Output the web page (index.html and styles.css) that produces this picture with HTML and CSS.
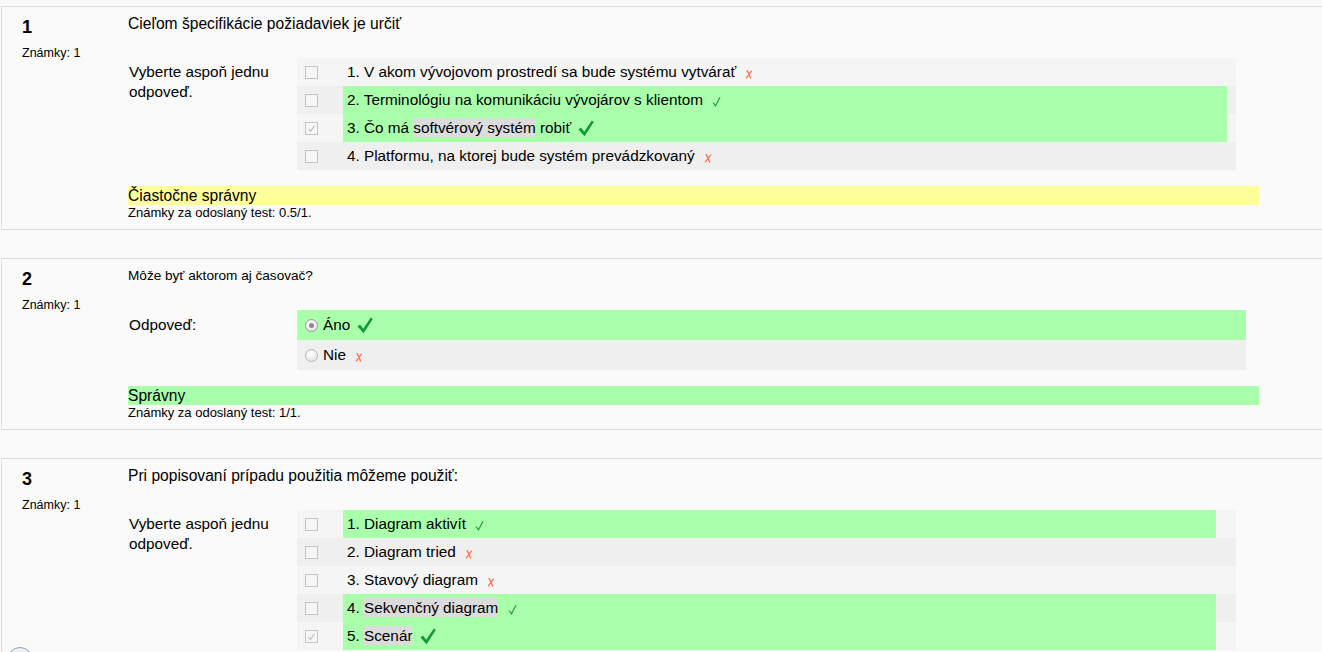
FILE: index.html
```html
<!DOCTYPE html>
<html lang="sk">
<head>
<meta charset="utf-8">
<title>Test</title>
<link rel="stylesheet" href="styles.css">
</head>
<body>
<div class="page">

  <div class="que">
    <div class="info">
      <h3 class="no">1</h3>
      <div class="grade">Známky: 1</div>
    </div>
    <div class="content">
      <div class="qtext">Cieľom špecifikácie požiadaviek je určiť</div>
      <div class="ablock">
        <div class="prompt">Vyberte aspoň jednu odpoveď.</div>
        <div class="answer">
          <div class="row r0">
            <div class="chk"><span class="box"></span></div>
            <div class="lbl">1. V akom vývojovom prostredí sa bude systému vytvárať <svg class="ic x" viewBox="0 0 8 10"><path d="M2.2 1.5 L5.6 9 M6.4 2.2 L1.4 8.8"/></svg></div>
          </div>
          <div class="row r1">
            <div class="chk"><span class="box"></span></div>
            <div class="lbl ok w1">2. Terminológiu na komunikáciu vývojárov s klientom <svg class="ic tick" viewBox="0 0 9 11"><path d="M1 6.5 L3.5 9.8 L8 1.2"/></svg></div>
          </div>
          <div class="row r0">
            <div class="chk"><span class="box on"><svg viewBox="0 0 11 11"><path d="M2.5 6 L4.5 8.5 L8.5 2.5"/></svg></span></div>
            <div class="lbl ok w1">3. Čo má <span class="hl">softvérový systém</span> robiť <svg class="ic bigtick" viewBox="0 0 16 17"><path d="M0.5 9.5 L3 7.5 L6.2 11.8 L13.8 0.5 L15.8 2 L6.6 16.2 Z"/></svg></div>
          </div>
          <div class="row r1">
            <div class="chk"><span class="box"></span></div>
            <div class="lbl">4. Platformu, na ktorej bude systém prevádzkovaný <svg class="ic x" viewBox="0 0 8 10"><path d="M2.2 1.5 L5.6 9 M6.4 2.2 L1.4 8.8"/></svg></div>
          </div>
        </div>
      </div>
      <div class="feedback partial">Čiastočne správny</div>
      <div class="marks">Známky za odoslaný test: 0.5/1.</div>
    </div>
  </div>

  <div class="que">
    <div class="info">
      <h3 class="no">2</h3>
      <div class="grade">Známky: 1</div>
    </div>
    <div class="content">
      <div class="qtext small">Môže byť aktorom aj časovač?</div>
      <div class="ablock">
        <div class="prompt radio-prompt">Odpoveď:</div>
        <div class="answer radios">
          <div class="rrow ok">
            <span class="radio on"></span><span class="rtext">Áno <svg class="ic bigtick" viewBox="0 0 16 17"><path d="M0.5 9.5 L3 7.5 L6.2 11.8 L13.8 0.5 L15.8 2 L6.6 16.2 Z"/></svg></span>
          </div>
          <div class="rrow r1">
            <span class="radio"></span><span class="rtext">Nie <svg class="ic x" viewBox="0 0 8 10"><path d="M2.2 1.5 L5.6 9 M6.4 2.2 L1.4 8.8"/></svg></span>
          </div>
        </div>
      </div>
      <div class="feedback correct">Správny</div>
      <div class="marks">Známky za odoslaný test: 1/1.</div>
    </div>
  </div>

  <div class="que">
    <div class="info">
      <h3 class="no">3</h3>
      <div class="grade">Známky: 1</div>
    </div>
    <div class="content">
      <div class="qtext">Pri popisovaní prípadu použitia môžeme použiť:</div>
      <div class="ablock">
        <div class="prompt">Vyberte aspoň jednu odpoveď.</div>
        <div class="answer">
          <div class="row r0">
            <div class="chk"><span class="box"></span></div>
            <div class="lbl ok w3">1. Diagram aktivít <svg class="ic tick" viewBox="0 0 9 11"><path d="M1 6.5 L3.5 9.8 L8 1.2"/></svg></div>
          </div>
          <div class="row r1">
            <div class="chk"><span class="box"></span></div>
            <div class="lbl">2. Diagram tried <svg class="ic x" viewBox="0 0 8 10"><path d="M2.2 1.5 L5.6 9 M6.4 2.2 L1.4 8.8"/></svg></div>
          </div>
          <div class="row r0">
            <div class="chk"><span class="box"></span></div>
            <div class="lbl">3. Stavový diagram <svg class="ic x" viewBox="0 0 8 10"><path d="M2.2 1.5 L5.6 9 M6.4 2.2 L1.4 8.8"/></svg></div>
          </div>
          <div class="row r1">
            <div class="chk"><span class="box"></span></div>
            <div class="lbl ok w3">4. <span class="hl">Sekvenčný diagram</span> <svg class="ic tick" viewBox="0 0 9 11"><path d="M1 6.5 L3.5 9.8 L8 1.2"/></svg></div>
          </div>
          <div class="row r0">
            <div class="chk"><span class="box on"><svg viewBox="0 0 11 11"><path d="M2.5 6 L4.5 8.5 L8.5 2.5"/></svg></span></div>
            <div class="lbl ok w3">5. <span class="hl">Scenár</span> <svg class="ic bigtick" viewBox="0 0 16 17"><path d="M0.5 9.5 L3 7.5 L6.2 11.8 L13.8 0.5 L15.8 2 L6.6 16.2 Z"/></svg></div>
          </div>
        </div>
      </div>
    </div>
  </div>

  <div class="dock-btn"></div>
</div>
</body>
</html>
```

FILE: styles.css
```css
html, body {
  margin: 0;
  padding: 0;
  overflow: hidden;
  height: 100%;
}
body {
  background: #fafafa;
  font-family: "Liberation Sans", Arial, sans-serif;
  color: #000;
}
.page {
  position: relative;
  padding-top: 6px;
  padding-left: 1px;
  width: 1400px;
  height: 646px;
}
.que {
  display: flex;
  border: 1px solid #dddddd;
  background: #fafafa;
  margin-bottom: 28px;
}
.info {
  width: 106px;
  padding: 8px 0 0 20px;
  flex: none;
}
.no {
  margin: 0;
  font-size: 18px;
  line-height: 24px;
  font-weight: bold;
}
.grade {
  margin-top: 8px;
  font-size: 12.5px;
  line-height: 13px;
}
.content {
  flex: 1;
  padding: 8px 0 8px 0;
}
.qtext {
  font-size: 15.6px;
  line-height: 18px;
  height: 18px;
}
.qtext.small {
  font-size: 13.6px;
}
.ablock {
  display: flex;
  margin-top: 25px;
}
.prompt {
  width: 150px;
  padding: 4px 18px 0 1px;
  font-size: 15.3px;
  line-height: 20px;
}
.radio-prompt {
  padding-top: 5px;
}
.answer {
  width: 939px;
  font-size: 15.3px;
}
.row {
  display: flex;
  height: 28px;
}
.r0 { background: #f5f5f5; }
.r1 { background: #efefef; }
.chk {
  width: 38px;
  padding-left: 8px;
  display: flex;
  align-items: center;
  flex: none;
}
.box {
  box-sizing: border-box;
  width: 13px;
  height: 13px;
  border: 1px solid #c4c4c4;
  background: #f6f6f6;
  display: flex;
  align-items: center;
  justify-content: center;
}
.box svg {
  width: 11px;
  height: 11px;
  fill: none;
  stroke: #bdbdbd;
  stroke-width: 1.2;
}
.lbl {
  padding-left: 4px;
  line-height: 28px;
  white-space: nowrap;
}
.lbl.ok { background: #aaffaa; }
.w1 { width: 880px; }
.w3 { width: 869px; }
.hl { background: #dcdcdc; padding: 1px 0; }
.ic {
  margin-left: 3px;
}
.ic.x {
  width: 8px;
  height: 10px;
  fill: none;
  stroke: #ff7450;
  stroke-width: 1.4;
  stroke-linecap: round;
  vertical-align: -2px;
  margin-left: 5px;
}
.ic.tick {
  width: 9px;
  height: 11px;
  fill: none;
  stroke: #22a045;
  stroke-width: 1.2;
  vertical-align: -2px;
  margin-left: 5px;
}
.ic.bigtick {
  width: 16px;
  height: 17px;
  fill: #129a35;
  vertical-align: -4px;
}
.radios {
  width: 949px;
}
.rrow {
  height: 30px;
  display: flex;
  align-items: center;
  padding-left: 8px;
}
.rrow.ok { background: #aaffaa; }
.rtext {
  white-space: nowrap;
  line-height: 30px;
}
.radio {
  box-sizing: border-box;
  width: 13px;
  height: 13px;
  border-radius: 50%;
  border: 1px solid #b8b8b8;
  background: radial-gradient(circle at 40% 35%, #ffffff, #dedede);
  margin-right: 5px;
  display: flex;
  align-items: center;
  justify-content: center;
  flex: none;
}
.radio.on::after {
  content: "";
  width: 5px;
  height: 5px;
  border-radius: 50%;
  background: #8a8a8a;
}
.radio.on {
  border-color: #9a9a9a;
}
.feedback {
  margin-top: 16px;
  width: 1131px;
  font-size: 15.6px;
  line-height: 19px;
  height: 19px;
}
.feedback.partial { background: #ffff9a; }
.feedback.correct { background: #aaffaa; }
.marks {
  font-size: 13px;
  line-height: 16px;
}
.dock-btn {
  position: absolute;
  left: 7px;
  top: 647px;
  width: 26px;
  height: 26px;
  box-sizing: border-box;
  border-radius: 50%;
  border: 1px solid #8ea2b6;
  background: #eef2f6;
}
```
